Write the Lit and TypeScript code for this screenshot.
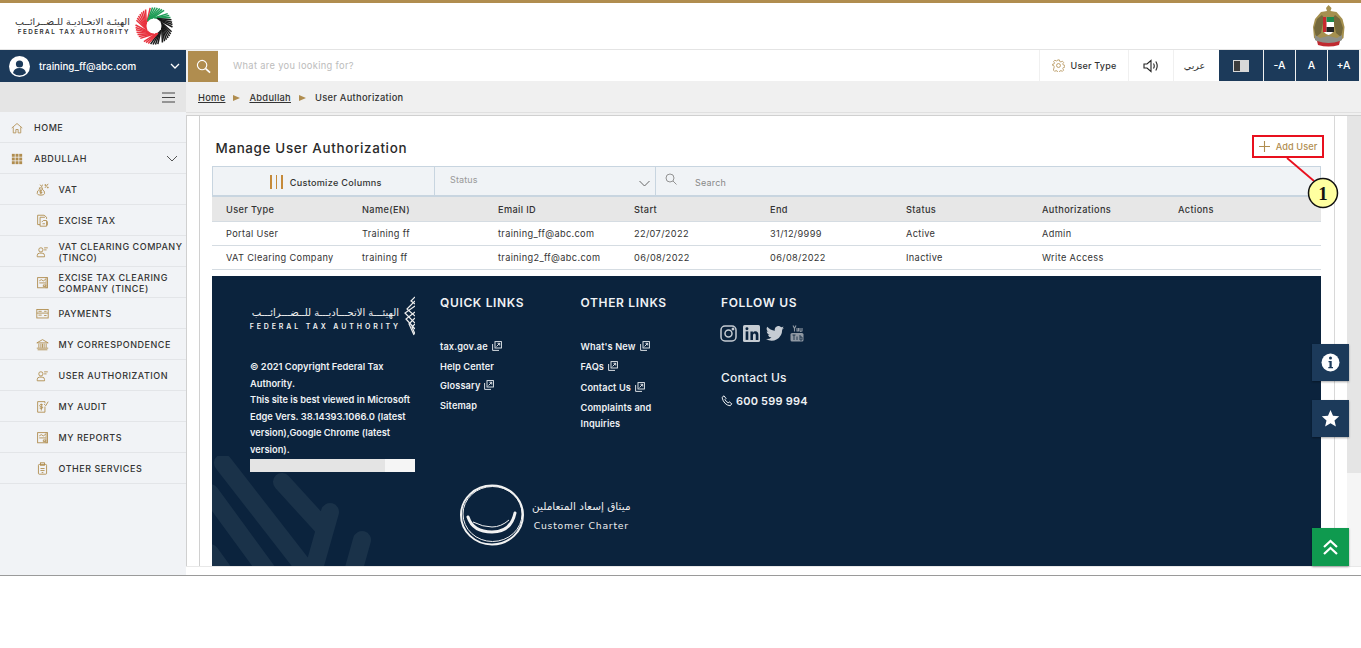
import { LitElement, html, css, svg } from "lit";
import { customElement } from "lit/decorators.js";

const pinwheel = () => {
  const out: any[] = [];
  const total = 48;
  for (let i = 0; i < total; i++) {
    if (i % 8 === 7) continue;
    const deg = (i / total) * 360;
    const a = ((deg - 90) * Math.PI) / 180;
    const b = ((deg - 90 + 48) * Math.PI) / 180;
    const x1 = 19 + 8 * Math.cos(a), y1 = 19 + 8 * Math.sin(a);
    const x2 = 19 + 18.5 * Math.cos(b), y2 = 19 + 18.5 * Math.sin(b);
    const colour = deg < 16 || deg >= 304 ? "#1f9d57" : deg < 150 ? "#1a1a1a" : "#e8343f";
    out.push(svg`<line x1=${x1} y1=${y1} x2=${x2} y2=${y2} stroke=${colour} stroke-width="1.5"/>`);
  }
  return html`<svg class="pin" viewBox="0 0 38 38">${out}</svg>`;
};

const emblem = html`<svg class="emblem" viewBox="0 0 33 44">
  <path d="M16.500 1l3 3-1 3 6 1 6 7 2 8-1 11-4 3-3 3H9l-3-3-4-3-1-11 2-8 6-7 6-1-1-3z" fill="#a5904f"/>
  <path d="M2 24l3-9 5-4 2 3-3 15-5 4zM31 24l-3-9-5-4-2 3 3 15 5 4z" fill="#75693c"/>
  <path d="M11 13h11v12q0 4-5.500 6-5.500-2-5.500-6z" fill="#fff"/>
  <rect x="11" y="13" width="3.500" height="15" fill="#c8272e"/>
  <rect x="14.500" y="13" width="7.500" height="5" fill="#1d8a4d"/>
  <rect x="14.500" y="23" width="7.500" height="5" fill="#222"/>
  <path d="M3 31l5 3 8.500-2 8.500 2 5-3 0 5-5 3H8l-5-3z" fill="#8e8f88"/>
  <path d="M5 37q11.500 4 23 0l-1 4q-10.500 3-21 0z" fill="#c02a30"/>
</svg>`;

const ic = (body: any) => html`<svg class="ico" viewBox="0 0 16 16" fill="none" stroke="currentColor" stroke-width="1.1">${svg`${body}`}</svg>`;

const personLines = svg`<circle cx="6" cy="6" r="2.6"/><path d="M1.5 14.5v-1.5q0-3 3-3h3q3 0 3 3v1.5z"/><path d="M10 3.5h4.5M10 6h3"/>`;
const report = svg`<rect x="2" y="2" width="12" height="12.5"/><path d="M4 6l2.5-1.5L9 6l3-2M4 8.5h8M9 11h3v2H9z"/><rect x="12" y="2" width="2" height="12.5" fill="currentColor" opacity=".4"/>`;

const icons: Record<string, any> = {
  home: ic(svg`<path d="M1 8l7-6 7 6M3 7v7.5h3.5V10h3v4.5H13V7"/>`),
  grid: html`<svg class="ico" viewBox="0 0 14 14" fill="currentColor"><rect x="1" y="1" width="3.4" height="3.4"/><rect x="5.3" y="1" width="3.4" height="3.4"/><rect x="9.6" y="1" width="3.4" height="3.4"/><rect x="1" y="5.3" width="3.4" height="3.4"/><rect x="5.3" y="5.3" width="3.4" height="3.4"/><rect x="9.6" y="5.3" width="3.4" height="3.4"/><rect x="1" y="9.6" width="3.4" height="3.4"/><rect x="5.3" y="9.6" width="3.4" height="3.4"/><rect x="9.6" y="9.6" width="3.4" height="3.4"/></svg>`,
  vat: ic(svg`<path d="M4 6h4l-.5 1.5Q11 9.5 10.500 13q-.5 2-4.500 2t-4.500-2Q1 9.500 4.500 7.500z"/><path d="M7.500 9q-3-1-3 .8t3 1.600q0 1.500-3 .6M6 8v6M5 2l2 2.500 1-2.500"/><path d="M11 6l4-5M11 2h1v1h-1zM14 5h1v1h-1z"/>`),
  excise: ic(svg`<path d="M2 13V1.500h8L13 4v2M2 13h3"/><path d="M5 15V4h6M7 10l2-2h4v7H5"/><path d="M8 12h3M14 9v5"/>`),
  person: ic(personLines),
  report: ic(report),
  pay: ic(svg`<rect x="1" y="3" width="14" height="10.500"/><path d="M1 7.500h14M3 5.300h4M10 5.300h3M3 10h4M10 10.500h3"/>`),
  bank: ic(svg`<path d="M1 6l7-4 7 4zM2 14.500h12M1 12.500h14M3.500 7v5M6 7v5M8 7v5M10 7v5M12.500 7v5"/>`),
  audit: ic(svg`<path d="M2 2h9v2M11 8v7H2V2"/><path d="M8.500 6q-4-1.500-4 .8t4 2q0 2.500-4 1.200M6.500 4.500v8.500"/><path d="M10 5l2 2 3-5"/>`),
  other: ic(svg`<rect x="3" y="3" width="10" height="12" rx="1"/><rect x="5.500" y="1" width="5" height="3"/><path d="M5.500 8h5M5.500 10.500h5M7 13h2"/>`),
};

const menu = [
  { t: "HOME", i: "home", top: true },
  { t: "ABDULLAH", i: "grid", top: true, chev: true },
  { t: "VAT", i: "vat" },
  { t: "EXCISE TAX", i: "excise" },
  { t: "VAT CLEARING COMPANY (TINCO)", i: "person" },
  { t: "EXCISE TAX CLEARING COMPANY (TINCE)", i: "report" },
  { t: "PAYMENTS", i: "pay" },
  { t: "MY CORRESPONDENCE", i: "bank" },
  { t: "USER AUTHORIZATION", i: "person" },
  { t: "MY AUDIT", i: "audit" },
  { t: "MY REPORTS", i: "report" },
  { t: "OTHER SERVICES", i: "other" },
];

const cols = ["User Type", "Name(EN)", "Email ID", "Start", "End", "Status", "Authorizations", "Actions"];
const rows = [
  ["Portal User", "Training ff", "training_ff@abc.com", "22/07/2022", "31/12/9999", "Active", "Admin", ""],
  ["VAT Clearing Company", "training ff", "training2_ff@abc.com", "06/08/2022", "06/08/2022", "Inactive", "Write Access", ""],
];

const ext = html`<svg class="ext" viewBox="0 0 10 10" fill="none" stroke="currentColor" stroke-width=".9"><rect x="3" y=".6" width="6.400" height="6.400"/><path d="M.6 3v6.400h6.400M4.500 5.500L7.500 2.500M5.500 2.300h2.200v2.200"/></svg>`;

@customElement("app-root")
export class AppRoot extends LitElement {
  static styles = css`
    :host { display: block; width: 1361px; height: 648px; background: #fff; font-family: Inter, "Noto Sans", sans-serif; color: #333; overflow: hidden; }
    * { box-sizing: border-box; }
    .page { position: relative; width: 1361px; height: 576px; border-bottom: 1px solid #9a9a9a; display: flex; flex-direction: column; overflow: hidden; }
    .goldbar { height: 3px; background: #b08d4f; flex: none; }
    .brand { height: 46px; flex: none; display: flex; align-items: center; justify-content: space-between; padding: 0 16px 0 15px; background: #fff; }
    .logo { display: flex; align-items: center; gap: 5px; }
    .logotext { display: flex; flex-direction: column; align-items: flex-end; color: #333; }
    .ar { font-family: "DejaVu Sans", sans-serif; font-size: 9.500px; line-height: 13px; white-space: nowrap; }
    .en { font-size: 6.300px; font-weight: 600; letter-spacing: 1.460px; line-height: 9px; white-space: nowrap; }
    .pin { width: 38px; height: 38px; display: block; }
    .emblem { width: 33px; height: 44px; display: block; }

    .nav { height: 33px; flex: none; display: flex; background: #f0f0f0; border-top: 1px solid #e4e4e4; }
    .user { width: 186px; height: 32px; background: #1c3a5a; color: #fff; display: flex; align-items: center; padding-left: 9px; font-size: 9.800px; font-weight: 500; }
    .avatar { width: 21px; height: 21px; margin-right: 9px; display: block; }
    .user span { flex: 1; }
    .user .chev { width: 10px; height: 10px; margin-right: 6px; }
    .searchbtn { width: 30px; height: 31px; margin: 1px 0 0 2px; background: #b08d4f; display: flex; align-items: center; justify-content: center; color: #fff; }
    .searchbtn svg { width: 15px; height: 15px; }
    .inp { flex: 1; height: 31px; background: #fff; color: #bcbcbc; font-size: 9.300px; letter-spacing: .34px; display: flex; align-items: center; padding-left: 15px; }
    .tool { height: 31px; background: #fff; margin-left: 1px; display: flex; align-items: center; justify-content: center; font-size: 9px; font-weight: 500; color: #333; }
    .t-user { width: 88px; gap: 6px; letter-spacing: .2px; }
    .t-user svg { width: 13px; height: 13px; color: #b08d4f; }
    .t-sound { width: 44px; }
    .t-sound svg { width: 16px; height: 14px; }
    .t-ar { width: 45px; font-family: "DejaVu Sans", sans-serif; font-size: 9.500px; font-weight: 400; padding-right: 4px; }
    .dark { height: 31px; background: #1c3a5a; color: #fff; display: flex; align-items: center; justify-content: center; font-size: 10.500px; font-weight: 500; width: 31px; margin-left: 1px; }
    .dark.contrast { width: 44px; margin-left: 0; }
    .contrastbox { width: 16px; height: 12px; border: 1px solid #d8d8d8; background: linear-gradient(90deg, #3c3c3c 0 45%, #d8d8d8 45%); display: block; }
    .tail { width: 2px; }

    .body { flex: 1; display: flex; min-height: 0; }
    .side { width: 186px; flex: none; background: #f1f3f6; }
    .burger { height: 30px; background: #e5e5e5; display: flex; align-items: center; justify-content: flex-end; padding-right: 11px; }
    .burger svg { width: 13px; height: 11px; }
    .mi { height: 31px; display: flex; align-items: center; border-bottom: 1px solid #e3e5e8; font-size: 9px; letter-spacing: .52px; line-height: 11px; color: #333; font-weight: 500; padding: 1px 0 0 36px; }
    .mi.top { padding-left: 11px; }
    .mi .ic { color: #b08d4f; width: 13px; height: 13px; margin-right: 9.500px; flex: none; display: flex; }
    .mi.top .ic { margin-right: 11px; width: 12px; height: 12px; }
    .ico { width: 100%; height: 100%; display: block; }
    .mi .lbl { flex: 1; }
    .mi svg.down { width: 12px; height: 8px; margin-right: 8px; }

    .right { flex: 1; display: flex; flex-direction: column; min-width: 0; }
    .crumbs { height: 31px; flex: none; background: #f0f0f0; border-bottom: 1px solid #e0e0e0; display: flex; align-items: center; padding: 1px 0 0 12px; font-size: 9.300px; letter-spacing: .29px; font-weight: 500; color: #333; }
    .crumbs u { text-underline-offset: 1px; }
    .crumbs i { width: 0; height: 0; border-left: 7px solid #b08d4f; border-top: 3.500px solid transparent; border-bottom: 3.500px solid transparent; margin: 0 9px 0 8px; }
    .scrollarea { flex: 1; min-height: 0; display: flex; padding-top: 2px; background: #f0f0f0; }
    .scroller { flex: 1; min-width: 0; background: #fff; border-left: 1px solid #d0d0d0; border-top: 1px solid #d0d0d0; padding-left: 12px; display: flex; }
    .card { width: 1136px; border-left: 1px solid #d0d0d0; padding: 0 13px 0 12px; margin-right: 12px; border-right: 1px solid #d8d8d8; }
    .track { width: 14px; background: linear-gradient(#e5e5e5 0 357px, #f5f5f5 357px); }
    .hbar { height: 9px; flex: none; background: #fff; border-top: 1px solid #e8e8e8; }

    .titlerow { height: 50px; display: flex; align-items: flex-end; justify-content: space-between; padding: 0 0 8px 3.500px; }
    h1 { margin: 0 0 2px; font-size: 13.400px; font-weight: 500; letter-spacing: .66px; color: #2a2a2a; line-height: 16px; }
    .add { width: 72px; height: 23px; margin: 0 -3px 0 0; border: 2px solid #e8101e; display: flex; align-items: center; justify-content: center; gap: 6px; color: #b08d4f; font-size: 9.200px; letter-spacing: .1px; font-weight: 500; white-space: nowrap; }
    .add svg { width: 11px; height: 11px; }

    .toolbar { height: 31px; display: flex; background: #f0f3f6; border: 1px solid #c8d5e0; border-bottom-width: 2px; }
    .tb-cust { width: 222px; border-right: 1px solid #c8d5e0; display: flex; align-items: center; justify-content: center; gap: 7px; font-size: 9.100px; letter-spacing: .3px; font-weight: 500; padding: 2px 0 0 5px; }
    .bars { display: flex; gap: 4px; }
    .bars b { width: 1.500px; height: 14px; background: #c58a3a; display: block; }
    .tb-status { width: 221px; border-right: 1px solid #c8d5e0; display: flex; justify-content: space-between; padding: 7px 5px 0 15px; color: #999; font-size: 9px; letter-spacing: .15px; }
    .tb-status svg { width: 11px; height: 7px; margin-top: 6px; color: #666; }
    .tb-search { flex: 1; display: flex; align-items: center; gap: 18px; padding: 3px 0 0 9px; color: #888; font-size: 9px; letter-spacing: .2px; }
    .tb-search svg { width: 12px; height: 12px; margin-top: -7px; }

    .tr { display: grid; grid-template-columns: repeat(8, 136px); padding-left: 14px; height: 24px; align-items: center; font-size: 9.200px; letter-spacing: .36px; font-weight: 400; color: #333; border-bottom: 1px solid #d5dce2; white-space: nowrap; }
    .tr.head { height: 25px; padding-top: 1px; background: #e7e7e7; font-weight: 500; }

    .foot { position: relative; height: 290px; margin-top: 6px; background: #0b233d; color: #eef1f4; padding: 20px 0 0 38px; overflow: hidden; }
    .deco { position: absolute; left: 0; bottom: 0; width: 170px; height: 110px; }
    .ftop { position: relative; display: flex; height: 188px; }
    .c1 { width: 190px; }
    .c2 { width: 140.500px; }
    .c3 { width: 140.500px; }
    .flogo { width: 165px; height: 40px; margin-top: 4px; display: flex; justify-content: flex-end; gap: 5px; }
    .flogo .t { display: flex; flex-direction: column; align-items: flex-end; padding-top: 6px; }
    .flogo .ar { font-size: 10px; line-height: 13px; color: #f0f0f0; }
    .flogo .en { font-size: 7px; letter-spacing: 2.900px; font-weight: 600; color: #f0f0f0; line-height: 10px; margin-top: 3px; margin-right: -2px; }
    .flogo svg { width: 11px; height: 40px; flex: none; margin-top: -4px; }
    .copy { width: 165px; margin: 19px 0 0; font-size: 9.300px; font-weight: 600; line-height: 16.600px; }
    .copy p { margin: 0; }
    .strip { width: 165px; height: 13px; background: linear-gradient(90deg, #e4e4e4 0 135px, #f5f5f5 135px); }
    h3 { margin: 0 0 31px; font-size: 12px; font-weight: 600; letter-spacing: .65px; line-height: 14px; color: #f0f2f5; }
    .l { font-size: 9.200px; font-weight: 600; letter-spacing: .12px; line-height: 12px; display: flex; align-items: center; gap: 4px; white-space: nowrap; }
    .c2 .l { margin-bottom: 7.500px; }
    .c3 .l { margin-bottom: 8.300px; }
    .c3 .l.wrap { white-space: normal; line-height: 16px; width: 90px; margin-top: -2px; }
    .ext { width: 10px; height: 10px; flex: none; margin-top: -2px; }
    .social { display: flex; gap: 6px; margin: -18px 0 0 -1px; height: 20px; align-items: center; color: #c6ccd3; }
    .social svg { display: block; }
    .contact { font-size: 12px; font-weight: 500; margin-top: 28px; line-height: 14px; letter-spacing: .2px; }
    .phone { display: flex; align-items: center; gap: 3px; font-size: 11px; font-weight: 600; margin-top: 9px; line-height: 14px; letter-spacing: .2px; }
    .phone svg { width: 12px; height: 12px; }
    .charter { position: relative; display: flex; align-items: center; gap: 7px; margin: 0 0 0 209px; color: #eee; }
    .charter svg { width: 66px; height: 62px; flex: none; }
    .charter .ct { display: flex; flex-direction: column; align-items: center; gap: 6px; }
    .charter .ct1 { font-family: "DejaVu Sans", sans-serif; font-size: 10.500px; line-height: 15px; }
    .charter .ct2 { font-family: "DejaVu Sans", sans-serif; font-size: 9.300px; letter-spacing: .75px; line-height: 12px; white-space: nowrap; }

    .fab { position: absolute; left: 1312px; width: 37px; height: 37px; background: #1c3a5a; color: #fff; display: flex; align-items: center; justify-content: center; box-shadow: 0 1px 2px rgba(0,0,0,.35); }
    .fab.info { top: 344px; }
    .fab.star { top: 400px; }
    .fab.up { top: 528px; height: 38px; background: #0f9a4f; }
    .fab svg { width: 19px; height: 19px; }
    .callout { position: absolute; left: 1280px; top: 150px; width: 62px; height: 62px; }
    .num { font-family: "Liberation Serif", serif; font-weight: 700; font-size: 19px; fill: #111; }
  `;

  render() {
    return html`<div class="page">
      <div class="goldbar"></div>
      <header class="brand">
        <div class="logo">
          <div class="logotext"><div class="ar" dir="rtl">الهيئـة الاتحـاديـة للـضــرائــب</div><div class="en">FEDERAL TAX AUTHORITY</div></div>
          ${pinwheel()}
        </div>
        ${emblem}
      </header>
      <div class="nav">
        <div class="user">
          <svg class="avatar" viewBox="0 0 21 21"><circle cx="10.500" cy="10.500" r="10.500" fill="#fff"/><circle cx="10.500" cy="8" r="3.600" fill="#1c3a5a"/><path d="M4 17q1-5 6.500-5T17 17q-3 2.500-6.500 2.500T4 17z" fill="#1c3a5a"/></svg>
          <span>training_ff@abc.com</span>
          <svg class="chev" viewBox="0 0 10 10" fill="none" stroke="#fff" stroke-width="1.300"><path d="M1 3l4 4 4-4"/></svg>
        </div>
        <div class="searchbtn"><svg viewBox="0 0 16 16" fill="none" stroke="currentColor" stroke-width="1.200"><circle cx="6.500" cy="6.500" r="5"/><path d="M10.300 10.300L15 14.500" stroke-width="1.800"/></svg></div>
        <div class="inp">What are you looking for?</div>
        <div class="tool t-user">
          <svg viewBox="0 0 16 16" fill="none" stroke="currentColor" stroke-width="1"><circle cx="8" cy="8" r="2.400"/><path d="M6.800 1h2.400l.4 2 1.600.7 1.800-1.100 1.700 1.700-1.100 1.800.7 1.600 2 .4v2.400l-2 .4-.7 1.600 1.100 1.800-1.700 1.700-1.800-1.100-1.600.7-.4 2H6.800l-.4-2-1.600-.7-1.800 1.100-1.700-1.700L2.400 10 1.700 8.400 0 8V6.800l2-.4.700-1.600-1.100-1.800 1.700-1.700 1.800 1.100 1.600-.7z" transform="translate(.5 .2) scale(.94)"/></svg>
          User Type
        </div>
        <div class="tool t-sound"><svg viewBox="0 0 16 14" fill="none" stroke="#222" stroke-width="1.100"><path d="M1 5h3l4-3.500v11L4 9H1z"/><path d="M10.500 4.500q1.500 2.500 0 5M12.800 2.500q2.800 4.500 0 9"/></svg></div>
        <div class="tool t-ar">عربي</div>
        <div class="dark contrast"><span class="contrastbox"></span></div>
        <div class="dark">-A</div>
        <div class="dark">A</div>
        <div class="dark">+A</div>
        <div class="tail"></div>
      </div>
      <div class="body">
        <aside class="side">
          <div class="burger"><svg viewBox="0 0 13 11" stroke="#444" stroke-width="1.100"><path d="M0 1h13M0 5.500h13M0 10h13"/></svg></div>
          ${menu.map(
            (m) => html`<div class="mi ${m.top ? "top" : ""}">
              <span class="ic">${icons[m.i]}</span><span class="lbl">${m.t}</span>
              ${m.chev ? html`<svg class="down" viewBox="0 0 12 8" fill="none" stroke="#555" stroke-width="1"><path d="M1 1l5 5 5-5"/></svg>` : ""}
            </div>`
          )}
        </aside>
        <div class="right">
          <div class="crumbs"><u>Home</u><i></i><u>Abdullah</u><i></i><span>User Authorization</span></div>
          <div class="scrollarea">
            <div class="scroller">
              <div class="card">
                <div class="titlerow">
                  <h1>Manage User Authorization</h1>
                  <div class="add"><svg viewBox="0 0 11 11" stroke="currentColor" stroke-width="1.100"><path d="M5.500 0v11M0 5.500h11"/></svg>Add User</div>
                </div>
                <div class="toolbar">
                  <div class="tb-cust"><span class="bars"><b></b><b></b><b></b></span>Customize Columns</div>
                  <div class="tb-status"><span>Status</span><svg viewBox="0 0 11 7" fill="none" stroke="currentColor"><path d="M.5 1l5 5 5-5"/></svg></div>
                  <div class="tb-search"><svg viewBox="0 0 12 12" fill="none" stroke="currentColor" stroke-width=".9"><circle cx="5" cy="5" r="4"/><path d="M8 8l3.500 3.500"/></svg><span>Search</span></div>
                </div>
                <div class="tr head">${cols.map((c) => html`<span>${c}</span>`)}</div>
                ${rows.map((r) => html`<div class="tr">${r.map((c) => html`<span>${c}</span>`)}</div>`)}
                <footer class="foot">
                  <svg class="deco" viewBox="0 0 170 110" fill="none" stroke="#1a3249" stroke-width="18" stroke-linecap="round">
                    <path d="M11 7l84 108M70 26l41 45M118 56l-17 60M150 84l-9 32M-2 37l57 78M-2 97l13 18"/>
                  </svg>
                  <div class="ftop">
                    <div class="c1">
                      <div class="flogo">
                        <div class="t"><div class="ar" dir="rtl">الهيئـــة الاتحـــاديـــة للــضـــرائـــب</div><div class="en">FEDERAL TAX AUTHORITY</div></div>
                        <svg viewBox="0 0 11 40" fill="none" stroke="#eee" stroke-width="1.200"><path d="M11 1L7 5l4 3M11 5L3 13l8 7M11 10L1 17l10 10M11 16L2 23l9 10M11 22L5 28l5 11M11 28l-3 3 3 7"/></svg>
                      </div>
                      <div class="copy">
                        <p>© 2021 Copyright Federal Tax Authority.</p>
                        <p>This site is best viewed in Microsoft Edge Vers. 38.14393.1066.0 (latest version),Google Chrome (latest version).</p>
                      </div>
                      <div class="strip"></div>
                    </div>
                    <div class="c2">
                      <h3>QUICK LINKS</h3>
                      <div class="l">tax.gov.ae ${ext}</div>
                      <div class="l">Help Center</div>
                      <div class="l">Glossary ${ext}</div>
                      <div class="l">Sitemap</div>
                    </div>
                    <div class="c3">
                      <h3>OTHER LINKS</h3>
                      <div class="l">What's New ${ext}</div>
                      <div class="l">FAQs ${ext}</div>
                      <div class="l">Contact Us ${ext}</div>
                      <div class="l wrap">Complaints and Inquiries</div>
                    </div>
                    <div class="c4">
                      <h3>FOLLOW US</h3>
                      <div class="social">
                        <svg width="17" height="17" viewBox="0 0 17 17" fill="none" stroke="currentColor" stroke-width="1.500"><rect x="1" y="1" width="15" height="15" rx="4"/><circle cx="8.500" cy="8.500" r="3.500"/><circle cx="13" cy="4" r=".7" fill="currentColor"/></svg>
                        <svg width="17" height="17" viewBox="0 0 16 16"><rect width="16" height="16" rx="1.500" fill="currentColor"/><rect x="2.500" y="6" width="2.500" height="8" fill="#0b233d"/><circle cx="3.700" cy="3.500" r="1.400" fill="#0b233d"/><path d="M7 6h2.300v1.200Q10 5.800 11.700 5.800q2.800 0 2.800 3.400V14H12V9.600q0-1.700-1.200-1.700-1.400 0-1.400 1.800V14H7z" fill="#0b233d"/></svg>
                        <svg width="18" height="15" viewBox="0 0 24 20" fill="currentColor"><path d="M24 2.400a10 10 0 0 1-2.800.8A5 5 0 0 0 23.300.5a10 10 0 0 1-3.100 1.200 4.900 4.900 0 0 0-8.400 4.500A14 14 0 0 1 1.700 1a4.900 4.900 0 0 0 1.500 6.600 4.900 4.900 0 0 1-2.200-.6c0 2.400 1.700 4.400 3.900 4.900a5 5 0 0 1-2.200.1 4.900 4.900 0 0 0 4.600 3.400A9.900 9.900 0 0 1 0 17.400 14 14 0 0 0 21.500 5q1.500-1.100 2.500-2.600z"/></svg>
                        <svg width="14" height="17" viewBox="0 0 14 17" fill="none" stroke="#8f98a3" stroke-width="1.100"><path d="M3 .5l1.500 3v3M6 .5l-1.500 3M7 3v3h1.500V3M10 3v3q0 .8 2 0V3"/><rect x=".5" y="8" width="13" height="8.500" rx="1.500" fill="#8f98a3" stroke="none"/><path d="M2.500 10h3M4 10v5M7 11.500v3.500M10 10v5h2v-3h-2" stroke="#0b233d" stroke-width=".8"/></svg>
                      </div>
                      <div class="contact">Contact Us</div>
                      <div class="phone"><svg viewBox="0 0 12 12" fill="none" stroke="currentColor" stroke-width="1"><path d="M1 2.500L3 .8l2 2.700-1 1q.8 2 3.200 3.300l1-1 2.600 2-1.600 2Q3 10 1 2.500z"/></svg>600 599 994</div>
                    </div>
                  </div>
                  <div class="charter">
                    <svg viewBox="0 0 66 62" fill="none" stroke="#f2f2f2">
                      <ellipse cx="33" cy="31" rx="31" ry="29.500" stroke-width="2"/>
                      <ellipse cx="33.500" cy="30" rx="29.500" ry="27.500" stroke-width="1"/>
                      <path d="M9 33q5 15 24 15t23-19" stroke-width="3" stroke-linecap="round"/>
                      <path d="M14 38q10 5 19 5t17-7" stroke-width="1"/>
                    </svg>
                    <div class="ct"><div class="ct1" dir="rtl">ميثاق إسعاد المتعاملين</div><div class="ct2">Customer Charter</div></div>
                  </div>
                </footer>
              </div>
              <div class="track"></div>
            </div>
          </div>
          <div class="hbar"></div>
        </div>
      </div>
      <svg class="callout" viewBox="0 0 62 62">
        <path d="M7 8l27 23" stroke="#e8101e" stroke-width="1.800"/>
        <circle cx="43" cy="43" r="14.500" fill="#ffffa0" stroke="#111" stroke-width="1.500"/>
        <text x="43" y="49.500" text-anchor="middle" class="num">1</text>
      </svg>
      <div class="fab info"><svg viewBox="0 0 19 19"><circle cx="9.500" cy="9.500" r="9" fill="#fff"/><circle cx="9.500" cy="5" r="1.500" fill="#1c3a5a"/><path d="M7.500 8h3.200v6h1.300v1.200H7.300V14h1.200V9.200h-1z" fill="#1c3a5a"/></svg></div>
      <div class="fab star"><svg viewBox="0 0 19 19"><path d="M9.500 1l2.500 5.700 6.200.6-4.700 4.100 1.400 6.100-5.400-3.200-5.400 3.200 1.400-6.100L.8 7.300 7 6.700z" fill="#fff"/></svg></div>
      <div class="fab up"><svg viewBox="0 0 19 19" fill="none" stroke="#fff" stroke-width="2.200"><path d="M3 9l6.500-6L16 9M3 16l6.500-6 6.500 6"/></svg></div>
    </div>`;
  }
}
